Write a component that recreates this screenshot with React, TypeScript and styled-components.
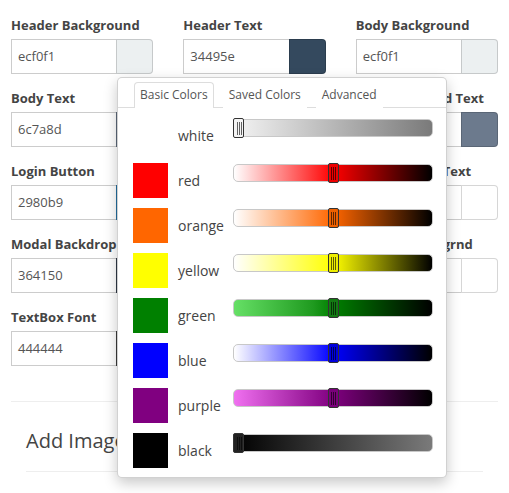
import React from "react";
import styled, { createGlobalStyle } from "styled-components";

const Global = createGlobalStyle`
  html, body { margin: 0; padding: 0; background: #fff; }
  body { font-family: "Open Sans", "Liberation Sans", sans-serif; }
  * { box-sizing: border-box; }
`;

const Page = styled.div`
  position: relative;
  width: 509px;
  height: 493px;
  overflow: hidden;
  padding: 16px 11px 0;
`;

const FieldGrid = styled.div`
  display: grid;
  grid-template-columns: repeat(3, 1fr);
  column-gap: 30px;
  row-gap: 15px;
`;

const Field = styled.div`
  display: flex;
  flex-direction: column;
  gap: 5px;
`;

const Label = styled.label`
  font-size: 13px;
  font-weight: 700;
  line-height: 18px;
  color: #444;
  white-space: nowrap;
`;

const InputGroup = styled.div`
  display: flex;
  height: 35px;
`;

const TextBox = styled.div`
  flex: 1;
  border: 1px solid #ccc;
  border-right: none;
  padding: 0 6px;
  font-size: 13px;
  line-height: 33px;
  color: #555;
`;

const Swatch = styled.div<{ $c: string }>`
  width: 37px;
  background: ${(p) => p.$c};
  border: 1px solid rgba(0, 0, 0, 0.16);
  border-radius: 0 4px 4px 0;
`;

const Divider = styled.hr<{ $inset?: number }>`
  border: none;
  border-top: 1px solid #eee;
  margin: 0 ${(p) => p.$inset ?? 0}px;
`;

const Section = styled.div`
  margin-top: 35px;
`;

const Heading = styled.h3`
  margin: 0;
  padding: 25px 15px 16px;
  font-size: 20px;
  line-height: 28px;
  font-weight: 400;
  color: #444;
`;

const Popup = styled.div`
  position: absolute;
  left: 117px;
  top: 77px;
  width: 330px;
  background: #fff;
  border: 1px solid rgba(0, 0, 0, 0.18);
  border-radius: 5px;
  box-shadow: 0 5px 14px rgba(0, 0, 0, 0.22);
`;

const TabList = styled.div`
  display: flex;
  gap: 9px;
  padding: 4px 16px 0;
  border-bottom: 1px solid #ddd;
`;

const Tab = styled.div<{ $active?: boolean }>`
  padding: 0 5px;
  font-size: 12px;
  line-height: 24px;
  color: #555;
  border: 1px solid ${(p) => (p.$active ? "#ddd" : "transparent")};
  border-bottom: none;
  border-radius: 4px 4px 0 0;
  background: #fff;
  margin-bottom: -1px;
  height: 26px;
`;

const Body = styled.div`
  display: flex;
  flex-direction: column;
  gap: 10px;
  padding: 10px 13px 9px 15px;
`;

const Row = styled.div`
  display: grid;
  grid-template-columns: 35px 45px 1fr;
  column-gap: 10px;
  height: 35px;
`;

const Chip = styled.div<{ $c: string }>`
  width: 35px;
  height: 35px;
  background: ${(p) => p.$c};
`;

const Name = styled.span`
  align-self: center;
  font-size: 14px;
  color: #444;
  line-height: 20px;
  white-space: nowrap;
`;

const Slider = styled.div`
  position: relative;
  height: 20px;
`;

const Track = styled.div<{ $g: string }>`
  position: absolute;
  left: 0;
  right: 0;
  top: 1px;
  bottom: 1px;
  border: 1px solid #c8c8c8;
  border-radius: 5px;
  background: ${(p) => p.$g};
`;

const Thumb = styled.div<{ $c: string }>`
  position: absolute;
  top: 0;
  width: 11px;
  height: 20px;
  border: 1.5px solid #333;
  border-radius: 2px;
  background:
    linear-gradient(90deg,
      transparent 2px, rgba(0,0,0,0.6) 2px, rgba(0,0,0,0.6) 3px,
      transparent 3px, transparent 4px, rgba(0,0,0,0.6) 4px, rgba(0,0,0,0.6) 5px,
      transparent 5px, transparent 6px, rgba(0,0,0,0.6) 6px, rgba(0,0,0,0.6) 7px,
      transparent 7px),
    ${(p) => p.$c};
  background-size: 8px 13px, auto;
  background-position: center, 0 0;
  background-repeat: no-repeat;
`;

type F = { label: string; value: string; color: string };

const fields: F[] = [
  { label: "Header Background", value: "ecf0f1", color: "#ecf0f1" },
  { label: "Header Text", value: "34495e", color: "#34495e" },
  { label: "Body Background", value: "ecf0f1", color: "#ecf0f1" },
  { label: "Body Text", value: "6c7a8d", color: "#6c7a8d" },
  { label: "Link Text", value: "3498db", color: "#3498db" },
  { label: "Modal Focused Text", value: "6c7a8d", color: "#6c7a8d" },
  { label: "Login Button", value: "2980b9", color: "#2980b9" },
  { label: "Login Hover", value: "3498db", color: "#3498db" },
  { label: "Login Button Text", value: "", color: "#ffffff" },
  { label: "Modal Backdrop", value: "364150", color: "#364150" },
  { label: "Modal Border", value: "", color: "#ffffff" },
  { label: "Content Backgrnd", value: "", color: "#ffffff" },
  { label: "TextBox Font", value: "444444", color: "#444444" },
  { label: "TextBox Border", value: "", color: "#ffffff" },
];

type C = { name: string; chip: string; grad: string; pos: number; thumb: string };

const colors: C[] = [
  { name: "white", chip: "#ffffff", grad: "linear-gradient(90deg,#f4f4f4,#7a7a7a)", pos: 0, thumb: "#f4f4f4" },
  { name: "red", chip: "#ff0000", grad: "linear-gradient(90deg,#fff,#ff0000 50%,#000)", pos: 0.5, thumb: "#ee0000" },
  { name: "orange", chip: "#ff6600", grad: "linear-gradient(90deg,#fff,#ff6600 50%,#000)", pos: 0.5, thumb: "#ee6000" },
  { name: "yellow", chip: "#ffff00", grad: "linear-gradient(90deg,#fff,#ffff00 50%,#000)", pos: 0.5, thumb: "#eeee00" },
  { name: "green", chip: "#008000", grad: "linear-gradient(90deg,#66e066,#1f9a1f 40%,#008000 50%,#000)", pos: 0.5, thumb: "#137a13" },
  { name: "blue", chip: "#0000ff", grad: "linear-gradient(90deg,#fff,#0000ff 50%,#000)", pos: 0.5, thumb: "#0000dd" },
  { name: "purple", chip: "#800080", grad: "linear-gradient(90deg,#f070f0,#a020a0 35%,#800080 50%,#000)", pos: 0.5, thumb: "#7a007a" },
  { name: "black", chip: "#000000", grad: "linear-gradient(90deg,#000,#7a7a7a)", pos: 0, thumb: "#222" },
];

export default function App() {
  return (
    <Page>
      <Global />
      <FieldGrid>
        {fields.map((f) => (
          <Field key={f.label}>
            <Label>{f.label}</Label>
            <InputGroup>
              <TextBox>{f.value}</TextBox>
              <Swatch $c={f.color} />
            </InputGroup>
          </Field>
        ))}
      </FieldGrid>
      <Section>
        <Divider />
        <Heading>Add Image</Heading>
        <Divider $inset={15} />
      </Section>
      <Popup>
        <TabList>
          <Tab $active>Basic Colors</Tab>
          <Tab>Saved Colors</Tab>
          <Tab>Advanced</Tab>
        </TabList>
        <Body>
          {colors.map((c) => (
            <Row key={c.name}>
              <Chip $c={c.chip} />
              <Name>{c.name}</Name>
              <Slider>
                <Track $g={c.grad} />
                <Thumb $c={c.thumb} style={{ left: `calc(${c.pos} * (100% - 11px))` }} />
              </Slider>
            </Row>
          ))}
        </Body>
      </Popup>
    </Page>
  );
}
